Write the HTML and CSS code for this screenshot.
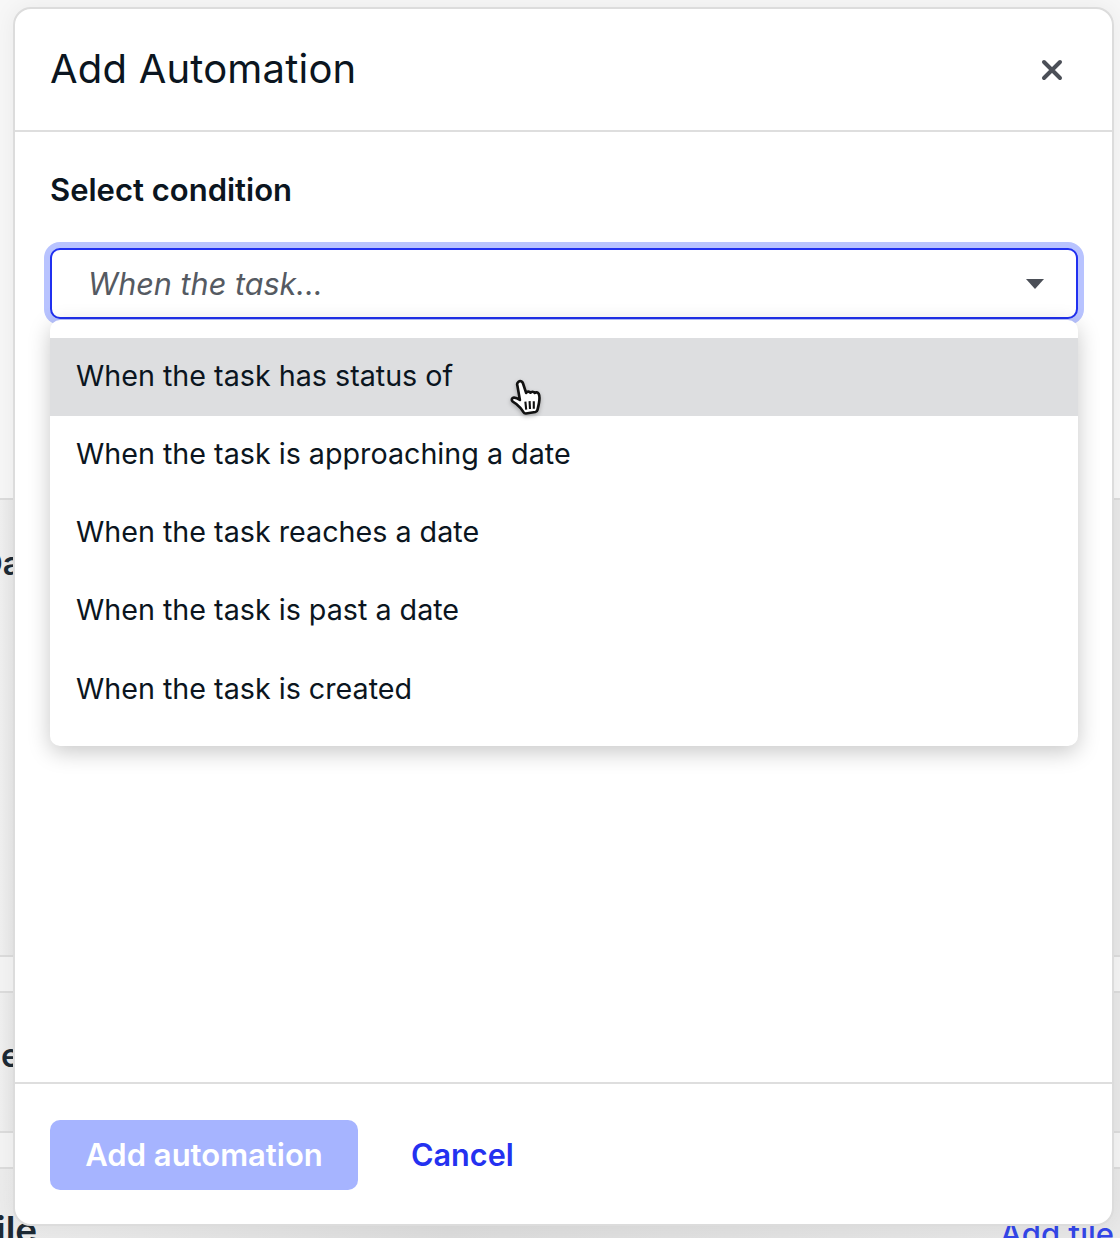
FILE: index.html
```html
<!DOCTYPE html>
<html lang="en">
<head>
    <meta charset="UTF-8">
    <meta name="viewport" content="width=device-width, initial-scale=1.0">
    <title>Add Automation</title>
    <link rel="stylesheet" href="styles.css">
</head>
<body>
    <!-- page behind the modal, only the edges show -->
    <div class="backdrop">
        <div class="bg-top"></div>
        <div class="bg-section bg-section-a"><span class="bg-text bg-text-a">Da</span></div>
        <div class="bg-row"></div>
        <div class="bg-section bg-section-b"><span class="bg-text bg-text-b">e</span></div>
        <div class="bg-row"></div>
        <div class="bg-files">
            <span class="bg-text bg-text-c">ile</span>
            <a class="bg-link">Add file</a>
        </div>
    </div>

    <div class="modal">
        <div class="modal-header">
            <h1>Add Automation</h1>
            <svg class="close-icon" width="22" height="22" viewBox="0 0 22 22">
                <path d="M3 3 L19 19 M19 3 L3 19" stroke="#4b4f57" stroke-width="4" stroke-linecap="round"/>
            </svg>
        </div>
        <div class="modal-body">
            <label class="field-label">Select condition</label>
            <div class="select-wrap">
                <div class="select-box">
                    <span class="placeholder">When the task...</span>
                    <span class="caret"></span>
                </div>
                <div class="field-behind"></div>
                <ul class="dropdown">
                    <li class="option active">When the task has status of</li>
                    <li class="option">When the task is approaching a date</li>
                    <li class="option">When the task reaches a date</li>
                    <li class="option">When the task is past a date</li>
                    <li class="option option-last">When the task is created</li>
                </ul>
                <svg class="hand-cursor" width="36" height="40" viewBox="0 0 34 38">
                    <path d="M8 3.500c1.600-1.200 3.600-.4 4.200 1.500l3 9.200c.8-1.600 3.200-1.800 4.200-.2.800-1.200 3-1.300 4 .2 1-.9 3-.7 3.800.8 1 2 .8 5.200.3 8.300-.4 2.700-1 5-1.500 7-.3 1.200-1 1.800-2 2l-9 1.400c-1 .1-1.800-.3-2.300-1.200-1.200-2.300-3.900-5.300-6.800-7.700-1.700-1.400-3.500-2.300-4.100-3.400-.6-1.300.4-2.700 1.800-2.800 1.700-.1 4 1 5.700 2.200L6.900 7.200C6.400 5.800 6.900 4.400 8 3.500z" fill="#fff" stroke="#111" stroke-width="2.500" stroke-linejoin="round"/>
                    <path d="M14.500 22.500l.8 7.500M18.500 22l.4 7.500M22.500 22v7.300" stroke="#111" stroke-width="2" fill="none"/>
                </svg>
            </div>
        </div>
        <div class="modal-footer">
            <button class="btn-primary" disabled>Add automation</button>
            <a class="btn-cancel">Cancel</a>
        </div>
    </div>
</body>
</html>
```

FILE: styles.css
```css
* {
    box-sizing: border-box;
}
html, body {
    margin: 0;
    padding: 0;
}
body {
    width: 1120px;
    height: 1238px;
    overflow: hidden;
    position: relative;
    font-family: Inter, "Liberation Sans", sans-serif;
    color: #0b1520;
    background: #f7f7f7;
}

/* background page */
.backdrop {
    height: 1238px;
    display: flex;
    flex-direction: column;
}
.bg-top {
    height: 500px;
    flex: none;
    background: #f7f7f7;
    border-bottom: 2px solid #dcdcdc;
}
.bg-section {
    flex: none;
    position: relative;
    background: linear-gradient(90deg, #f0f0f0, #e8e8e8 14px, #e8e8e8);
}
.bg-section-a {
    height: 455px;
}
.bg-section-b {
    height: 138px;
}
.bg-row {
    height: 38px;
    flex: none;
    background: #f4f4f4;
    border-top: 2px solid #dcdcdc;
    border-bottom: 2px solid #dcdcdc;
}
.bg-files {
    flex: 1;
    display: flex;
    justify-content: space-between;
    background: linear-gradient(90deg, #ececec, #dcdcdc 40%, #e8e8e8);
}
.bg-text {
    font-size: 33px;
    font-weight: 600;
    color: #1d2a35;
    white-space: nowrap;
}
.bg-text-a {
    position: absolute;
    left: -21px;
    top: 43px;
}
.bg-text-b {
    position: absolute;
    left: 1px;
    top: 42px;
}
.bg-text-c {
    margin: 38px 0 0 -4px;
    font-size: 37px;
}
.bg-link {
    margin: 46px 6px 0 0;
    font-size: 31px;
    font-weight: 500;
    color: #3346e8;
    white-space: nowrap;
}

/* modal */
.modal {
    position: absolute;
    left: 13px;
    top: 7px;
    width: 1101px;
    height: 1219px;
    display: flex;
    flex-direction: column;
    background: #fff;
    border: 2px solid #dcdcdc;
    border-radius: 18px;
    box-shadow: 0 0 24px rgba(0, 0, 0, 0.06);
}
.modal-header {
    height: 123px;
    flex: none;
    display: flex;
    align-items: center;
    justify-content: space-between;
    padding: 0 49px 0 35px;
    border-bottom: 2px solid #dedede;
}
.modal-header h1 {
    margin: 0 0 2px;
    font-size: 40px;
    font-weight: 400;
    line-height: 48px;
    letter-spacing: 0.2px;
}
.close-icon {
    display: block;
    margin-top: 1px;
}
.modal-body {
    flex: 1;
    padding: 40px 34px 0 35px;
}
.field-label {
    display: block;
    font-size: 31px;
    font-weight: 600;
    line-height: 36px;
}
.select-wrap {
    position: relative;
    margin-top: 40px;
}
.select-box {
    height: 71px;
    display: flex;
    align-items: center;
    justify-content: space-between;
    padding: 0 32px 0 36px;
    background: #fff;
    border: 2px solid #2030f0;
    border-radius: 10px;
    box-shadow: 0 0 0 6px #b8c3ff;
}
.placeholder {
    font-size: 30.600px;
    font-style: italic;
    color: #555a62;
}
.caret {
    width: 0;
    height: 0;
    border-left: 9px solid transparent;
    border-right: 9px solid transparent;
    border-top: 10px solid #4b4f57;
}
.field-behind {
    position: absolute;
    right: 0;
    top: 230px;
    width: 40px;
    height: 56px;
    background: #fff;
    border-right: 2px solid #d8d8d8;
}
.dropdown {
    position: absolute;
    left: 0;
    right: 0;
    top: 72px;
    margin: 0;
    padding: 18px 0;
    list-style: none;
    background: #fff;
    border-radius: 10px;
    box-shadow: 0 6px 22px rgba(0, 0, 0, 0.22);
}
.option {
    height: 78px;
    display: flex;
    align-items: center;
    padding: 0 26px 4px;
    font-size: 28.700px;
}
.option-last {
    padding-bottom: 2px;
}
.option.active {
    background: #dddee0;
}
.hand-cursor {
    position: absolute;
    left: 460px;
    top: 130px;
    filter: drop-shadow(0 2px 2px rgba(0, 0, 0, 0.25));
}
.modal-footer {
    height: 142px;
    flex: none;
    display: flex;
    align-items: center;
    gap: 53px;
    padding: 2px 34px 0 35px;
    border-top: 2px solid #dedede;
}
.btn-primary {
    width: 308px;
    height: 70px;
    padding: 0 0 2px;
    border: none;
    border-radius: 10px;
    background: #a6b4ff;
    color: #fff;
    font-family: inherit;
    font-size: 31px;
    font-weight: 600;
}
.btn-cancel {
    margin-top: -2px;
    font-size: 30.600px;
    font-weight: 600;
    color: #2431f0;
}
```
